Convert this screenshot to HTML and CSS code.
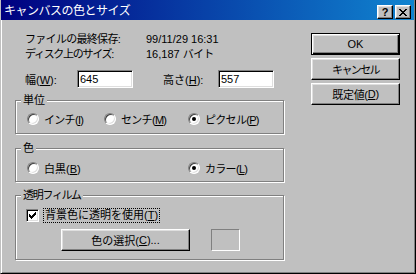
FILE: index.html
```html
<html>
<head>
<title>キャンバスの色とサイズ</title>
<link rel="stylesheet" href="styles.css">
</head>
<body>
<div class="window">
  <div class="titlebar">
    <span class="title">キャンバスの色とサイズ</span>
    <div class="tb-buttons">
      <span class="tb-btn help">?</span>
      <span class="tb-btn"><svg width="8" height="7" viewBox="0 0 8 7" shape-rendering="crispEdges"><path d="M0 0h2v1H0zM6 0h2v1H6zM1 1h2v1H1zM5 1h2v1H5zM2 2h4v1H2zM3 3h2v1H3zM2 4h4v1H2zM1 5h2v1H1zM5 5h2v1H5zM0 6h2v1H0zM6 6h2v1H6z" fill="#000"/></svg></span>
    </div>
  </div>
  <div class="client">
    <div class="left">
      <div class="info"><span class="lbl kana">ファイルの最終保存:</span><span>99/11/29 16:31</span></div>
      <div class="info"><span class="lbl kana2">ディスク上のサイズ:</span><span>16,187 <span class="kana">バイト</span></span></div>
      <div class="size-row">
        <span class="size-lbl">幅(<u>W</u>):</span>
        <span class="edit">645</span>
        <span class="size-lbl2">高さ(<u>H</u>):</span>
        <span class="edit">557</span>
      </div>

      <div class="group g-unit">
        <span class="legend">単位</span>
        <div class="opts">
          <div class="opt w77"><span class="radio"></span><span class="kana">インチ(<u>I</u>)</span></div>
          <div class="opt w84"><span class="radio"></span><span class="kana">センチ(<u>M</u>)</span></div>
          <div class="opt"><span class="radio on"></span><span class="kana">ピクセル(<u>P</u>)</span></div>
        </div>
      </div>

      <div class="group g-color">
        <span class="legend">色</span>
        <div class="opts">
          <div class="opt w161"><span class="radio"></span><span>白黒(<u>B</u>)</span></div>
          <div class="opt"><span class="radio on"></span><span class="kana">カラー(<u>L</u>)</span></div>
        </div>
      </div>

      <div class="group g-trans">
        <span class="legend kana2">透明フィルム</span>
        <div class="chk-row">
          <span class="chk"><svg width="7" height="7" viewBox="0 0 7 7" shape-rendering="crispEdges"><path d="M0 2h1v3H0zM1 3h1v3H1zM2 4h1v3H2zM3 3h1v3H3zM4 2h1v3H4zM5 1h1v3H5zM6 0h1v3H6z" fill="#000"/></svg></span>
          <span class="focus">背景色に透明を使用(<u>T</u>)</span>
        </div>
        <div class="bottom-row">
          <span class="btn pick">色の選択(<u>C</u>)...</span>
          <span class="swatch"></span>
        </div>
      </div>
    </div>

    <div class="right">
      <span class="btn default">OK</span>
      <span class="btn kana3">キャンセル</span>
      <span class="btn tight">既定値(<u>D</u>)</span>
    </div>
  </div>
</div>
</body>
</html>
```

FILE: styles.css
```css
* { box-sizing: border-box; }
body { margin: 0; background: #c0c0c0; color: #000;
  font-family: "Liberation Sans", "Noto Sans CJK JP", sans-serif; font-size: 11px; }
u { text-decoration: underline; text-underline-offset: 1px; }

/* katakana runs are narrower in the original UI font */
.kana { letter-spacing: -0.7px; }
.kana2 { letter-spacing: -1.3px; }
.kana3 { letter-spacing: -1.6px; }
.tight { letter-spacing: -0.3px; }

/* window frame */
.window { width: 416px; height: 274px; background: #c0c0c0; display: flex; flex-direction: column;
  border-left: 1px solid #c0c0c0; border-right: 1px solid #000; border-bottom: 1px solid #000;
  box-shadow: inset 1px 0 #fff, inset -1px -1px #808080; }

.titlebar { height: 20px; margin-right: 1px; display: flex; align-items: flex-start; color: #fff;
  background: linear-gradient(to right, #000080, #1084d0); }
.title { margin-left: 3px; padding-top: 1px; font-size: 12px; line-height: 20px; letter-spacing: -0.5px; }
.tb-buttons { margin-left: auto; margin-top: 5px; margin-right: 3px; display: flex; gap: 2px; }
.tb-btn { width: 16px; height: 14px; background: #c0c0c0; color: #000; display: flex;
  align-items: center; justify-content: center;
  border: 1px solid; border-color: #fff #000 #000 #fff;
  box-shadow: inset -1px -1px #808080, inset 1px 1px #dfdfdf; }
.tb-btn.help { font-weight: bold; font-size: 11px; line-height: 12px; }

/* dialog body */
.client { flex: 1; display: flex; padding: 12px 0 0 14px; }
.left { width: 269px; display: flex; flex-direction: column; }
.right { margin-left: 27px; padding-top: 1px; display: flex; flex-direction: column; gap: 3px; }

.info { display: flex; height: 15px; line-height: 15px; margin-left: 10px; }
.info .lbl { width: 121px; }

.size-row { display: flex; align-items: center; height: 18px; margin: 8px 0 0 10px; }
.size-lbl { width: 52px; }
.size-lbl2 { width: 55px; margin-left: 30px; }
.edit { width: 56px; height: 18px; background: #fff; padding-left: 2px; line-height: 16px;
  border: 1px solid; border-color: #808080 #fff #fff #808080;
  box-shadow: inset 1px 1px #000, inset -1px -1px #dfdfdf; }

/* group boxes */
.group { position: relative; border: 1px solid #808080;
  box-shadow: inset 1px 1px #fff, 1px 1px #fff; }
.legend { position: absolute; top: -8px; left: 5px; padding: 0 2px; background: #c0c0c0; line-height: 15px; }
.g-unit { height: 34px; margin-top: 12px; }
.g-color { height: 34px; margin-top: 14px; }
.g-trans { height: 65px; margin-top: 13px; }

.opts { display: flex; padding: 12px 0 0 11px; }
.g-color .opts { padding-top: 13px; }
.opt { display: flex; align-items: center; height: 12px; }
.opt .radio { margin-right: 5px; }
.w77 { width: 77px; }
.w84 { width: 84px; }
.w161 { width: 161px; }

.radio { position: relative; flex: none; width: 12px; height: 12px; border-radius: 50%; background: #fff;
  border: 1px solid; border-color: #808080 #fff #fff #808080;
  box-shadow: inset 1px 1px #404040, inset -1px -1px #dfdfdf; }
.radio.on::after { content: ""; position: absolute; left: 3px; top: 3px; width: 4px; height: 4px;
  border-radius: 50%; background: #000; }

.chk-row { display: flex; align-items: center; padding: 12px 0 0 10px; }
.chk { flex: none; width: 13px; height: 13px; background: #fff;
  border: 1px solid; border-color: #808080 #fff #fff #808080;
  box-shadow: inset 1px 1px #000, inset -1px -1px #dfdfdf; }
.chk svg { display: block; margin: 2px; }
.focus { margin-left: 4px; height: 15px; line-height: 13px; padding: 0 1px; border: 1px dotted #000; }

.bottom-row { display: flex; margin: 6px 0 0 45px; }
.swatch { width: 29px; height: 22px; margin-left: 21px; border: 1px solid; border-color: #808080 #fff #fff #808080; }

/* push buttons */
.btn { width: 89px; height: 22px; background: #c0c0c0; display: flex; align-items: center; justify-content: center;
  border: 1px solid; border-color: #fff #000 #000 #fff;
  box-shadow: inset -1px -1px #808080, inset 1px 1px #dfdfdf; }
.btn.default { border-color: #000;
  box-shadow: inset 1px 1px #fff, inset -1px -1px #000, inset -2px -2px #808080, inset 2px 2px #dfdfdf; }
.btn.pick { width: 129px; }
```
